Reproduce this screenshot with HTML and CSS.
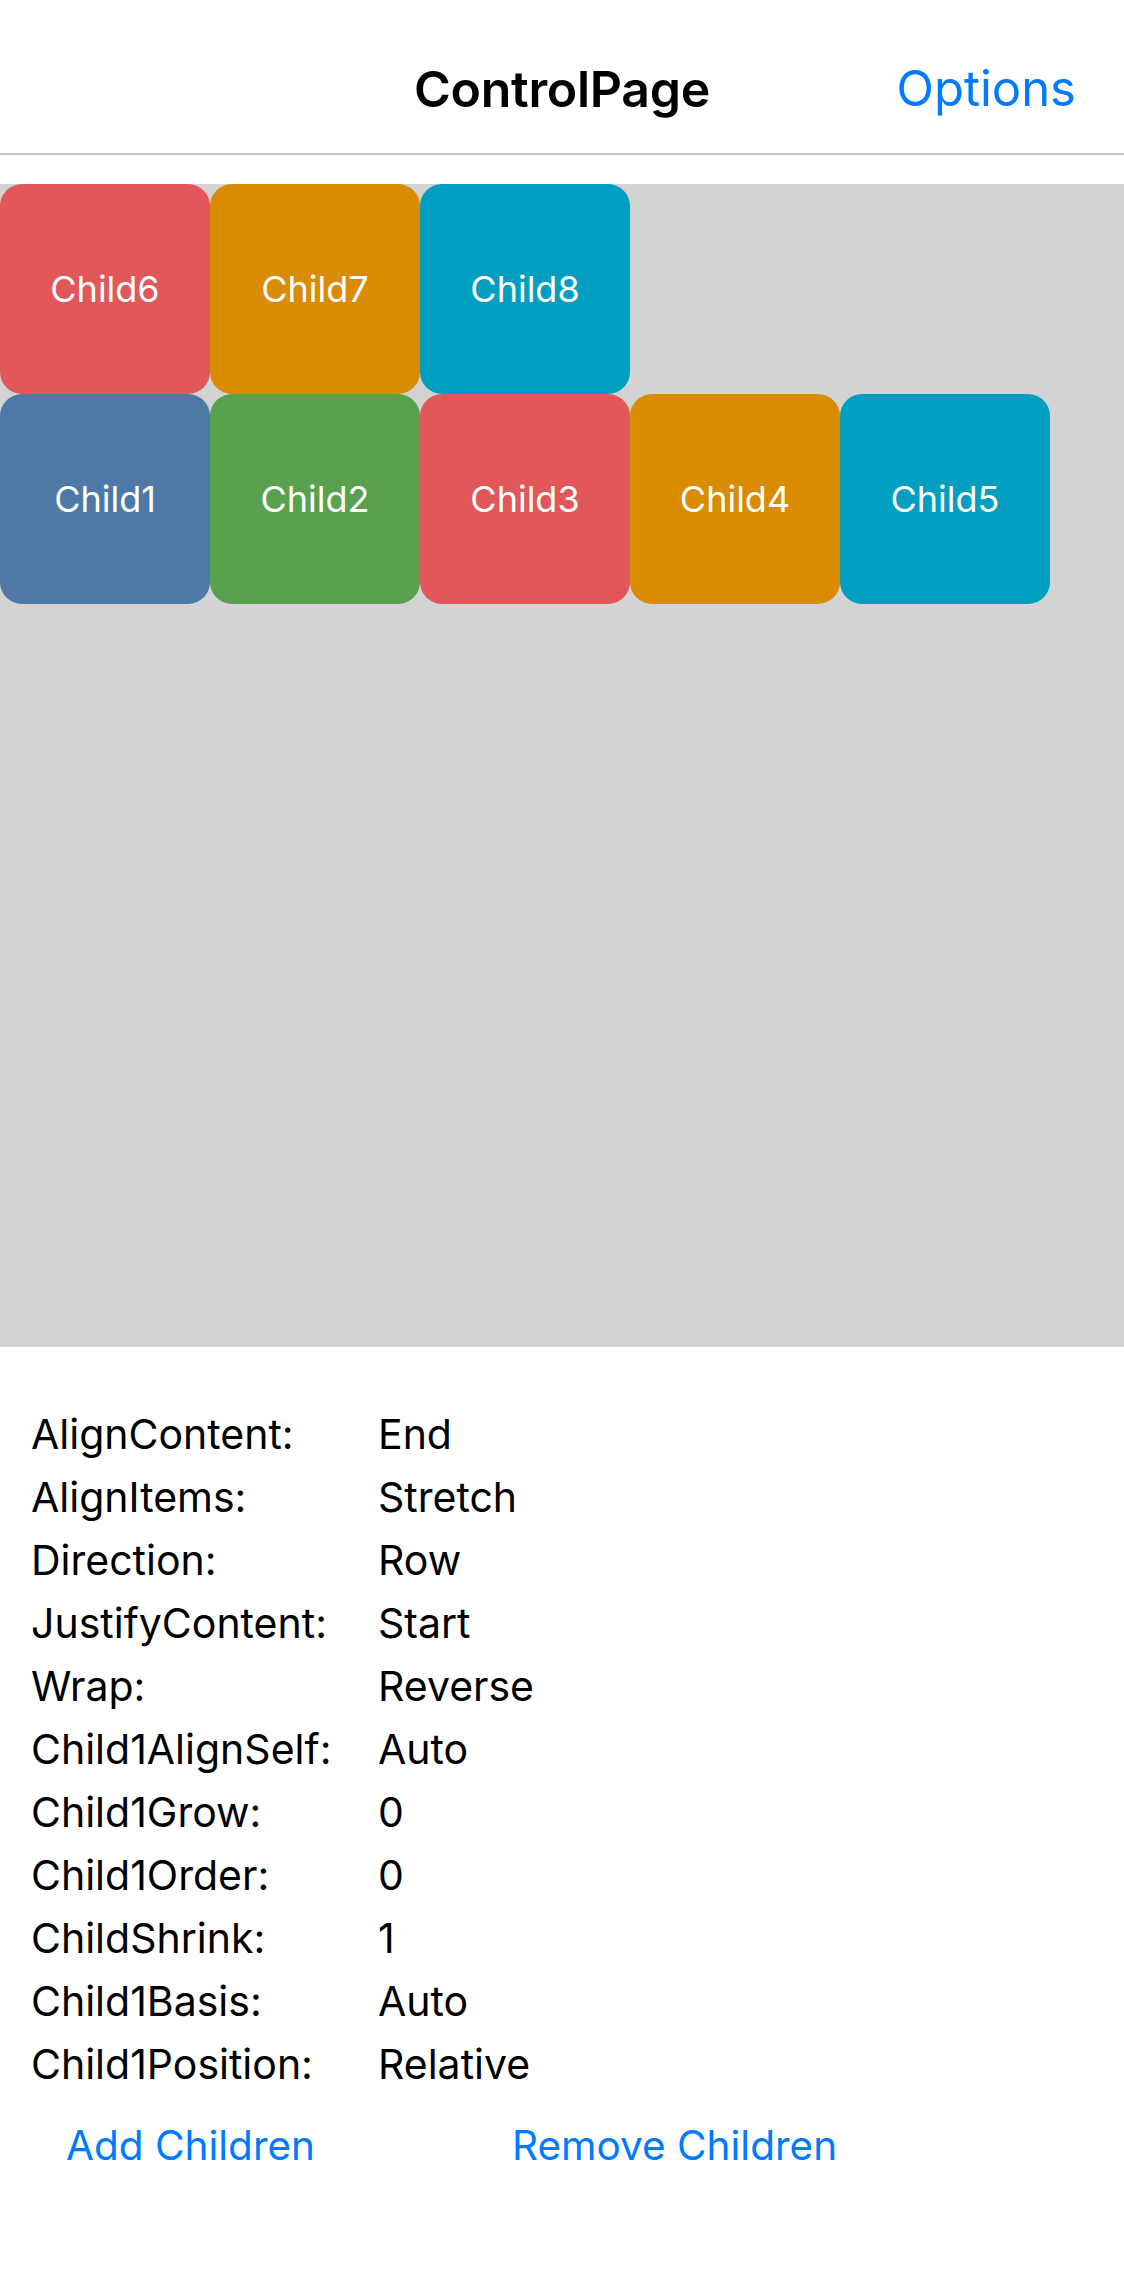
FILE: index.html
```html
<!DOCTYPE html>
<html lang="en">
<head>
<meta charset="utf-8">
<title>ControlPage</title>
<link rel="stylesheet" href="styles.css">
</head>
<body>
<header class="navbar">
  <div class="nav-title">ControlPage</div>
  <div class="nav-action">Options</div>
</header>
<main>
  <section class="flex-area">
    <div class="child c-blue">Child1</div>
    <div class="child c-green">Child2</div>
    <div class="child c-red">Child3</div>
    <div class="child c-orange">Child4</div>
    <div class="child c-teal">Child5</div>
    <div class="child c-red">Child6</div>
    <div class="child c-orange">Child7</div>
    <div class="child c-teal">Child8</div>
  </section>
  <section class="props">
    <div class="prop"><span class="key">AlignContent:</span><span class="val">End</span></div>
    <div class="prop"><span class="key">AlignItems:</span><span class="val">Stretch</span></div>
    <div class="prop"><span class="key">Direction:</span><span class="val">Row</span></div>
    <div class="prop"><span class="key">JustifyContent:</span><span class="val">Start</span></div>
    <div class="prop"><span class="key">Wrap:</span><span class="val">Reverse</span></div>
    <div class="prop"><span class="key">Child1AlignSelf:</span><span class="val">Auto</span></div>
    <div class="prop"><span class="key">Child1Grow:</span><span class="val">0</span></div>
    <div class="prop"><span class="key">Child1Order:</span><span class="val">0</span></div>
    <div class="prop"><span class="key">ChildShrink:</span><span class="val">1</span></div>
    <div class="prop"><span class="key">Child1Basis:</span><span class="val">Auto</span></div>
    <div class="prop"><span class="key">Child1Position:</span><span class="val">Relative</span></div>
  </section>
  <section class="actions">
    <button class="btn btn-add">Add Children</button>
    <button class="btn btn-remove">Remove Children</button>
  </section>
</main>
</body>
</html>
```
FILE: styles.css
```css
html, body {
  margin: 0;
  padding: 0;
  background: #ffffff;
}
body {
  font-family: Inter, "Noto Sans", "Liberation Sans", sans-serif;
  color: #000;
  width: 1124px;
}
.navbar {
  height: 155px;
  border-bottom: 2px solid #c4c4c4;
  display: flex;
  align-items: center;
  justify-content: center;
  position: relative;
  box-sizing: border-box;
  padding-top: 24px;
}
.nav-title {
  font-size: 50px;
  font-weight: 600;
  letter-spacing: -0.3px;
}
.nav-action {
  position: absolute;
  right: 48px;
  top: 24px;
  bottom: 0;
  display: flex;
  align-items: center;
  font-size: 49px;
  color: #007aff;
}
main {
  padding-top: 29px;
}
.flex-area {
  height: 1163px;
  background: #d3d3d3;
  display: flex;
  flex-wrap: wrap-reverse;
  align-content: flex-end;
  justify-content: flex-start;
}
.child {
  width: 210px;
  height: 210px;
  border-radius: 22px;
  color: #fff;
  font-size: 36px;
  display: flex;
  align-items: center;
  justify-content: center;
}
.c-blue { background: #4e79a7; }
.c-green { background: #59a14f; }
.c-red { background: #e1575a; }
.c-orange { background: #d98c00; }
.c-teal { background: #009ec1; }
.props {
  padding: 55px 0 0 31px;
}
.prop {
  display: flex;
  height: 63px;
  align-items: center;
  font-size: 41px;
}
.key {
  width: 347px;
}
.actions {
  display: flex;
  padding-top: 20px;
}
.btn {
  border: 0;
  background: none;
  padding: 0;
  font-family: inherit;
  font-size: 40.5px;
  color: #007aff;
  height: 60px;
}
.btn-add {
  margin-left: 66px;
}
.btn-remove {
  margin-left: 197px;
}
```
